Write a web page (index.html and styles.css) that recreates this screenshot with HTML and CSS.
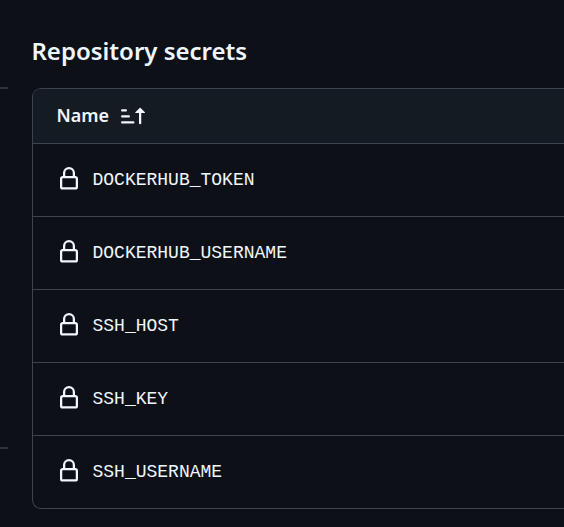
FILE: index.html
```html
<!DOCTYPE html>
<html lang="en">

<head>
    <meta charset="UTF-8">
    <meta name="viewport" content="width=device-width, initial-scale=1.0">
    <title>Repository secrets</title>
    <link rel="stylesheet" href="styles.css">
</head>

<body>
    <svg class="sprite" width="0" height="0">
        <symbol id="lock" viewBox="0 0 16 16">
            <path d="M4 4a4 4 0 0 1 8 0v2h.25c.966 0 1.75.784 1.75 1.75v5.5A1.75 1.75 0 0 1 12.25 15h-8.5A1.75 1.75 0 0 1 2 13.25v-5.5C2 6.784 2.784 6 3.75 6H4Zm8.25 3.5h-8.5a.25.25 0 0 0-.25.25v5.5c0 .138.112.25.25.25h8.5a.25.25 0 0 0 .25-.25v-5.5a.25.25 0 0 0-.25-.25ZM10.5 6V4a2.5 2.5 0 1 0-5 0v2Z" />
        </symbol>
    </svg>

    <div class="page">
        <div class="sidebar">
            <div class="divider"></div>
            <div class="divider"></div>
        </div>

        <div class="secrets">
            <h2 class="title">Repository secrets</h2>
            <div class="table">
                <div class="table-head">
                    <span class="label">Name</span>
                    <svg class="sort" viewBox="0 0 16 16">
                        <path d="m12.927 2.573 3 3A.25.25 0 0 1 15.75 6H13.5v6.75a.75.75 0 0 1-1.5 0V6H9.75a.25.25 0 0 1-.177-.427l3-3a.25.25 0 0 1 .354 0ZM0 12.25a.75.75 0 0 1 .75-.75h7.5a.75.75 0 0 1 0 1.5H.75a.75.75 0 0 1-.75-.75Zm0-4a.75.75 0 0 1 .75-.75h4.5a.75.75 0 0 1 0 1.5H.75A.75.75 0 0 1 0 8.25Zm0-4a.75.75 0 0 1 .75-.75h2.5a.75.75 0 0 1 0 1.5H.75A.75.75 0 0 1 0 4.25Z" />
                    </svg>
                </div>
                <div class="row"><svg class="lock"><use href="#lock" /></svg><code>DOCKERHUB_TOKEN</code></div>
                <div class="row"><svg class="lock"><use href="#lock" /></svg><code>DOCKERHUB_USERNAME</code></div>
                <div class="row"><svg class="lock"><use href="#lock" /></svg><code>SSH_HOST</code></div>
                <div class="row"><svg class="lock"><use href="#lock" /></svg><code>SSH_KEY</code></div>
                <div class="row"><svg class="lock"><use href="#lock" /></svg><code>SSH_USERNAME</code></div>
            </div>
        </div>
    </div>
</body>

</html>
```
FILE: styles.css
```css
* {
    box-sizing: border-box;
}

body {
    margin: 0;
    background-color: #0d1117;
    color: #f0f6fc;
    font-family: "Noto Sans", sans-serif;
    overflow: hidden;
}

.sprite {
    display: none;
}

.page {
    display: flex;
    height: 527px;
}

.sidebar {
    width: 8px;
    margin-right: 24px;
    padding-top: 87px;
}

.divider {
    height: 2px;
    margin-bottom: 358px;
    background-color: #2d323a;
}

.secrets {
    flex: 1;
    padding-top: 33px;
}

.title {
    margin: 0 0 19px -0.6px;
    font-size: 24px;
    line-height: 36px;
    font-weight: 600;
}

.table {
    border: 1px solid #3d444d;
    border-right: 0;
    border-radius: 9px 0 0 9px;
    overflow: hidden;
}

.table-head {
    display: flex;
    align-items: center;
    height: 54px;
    padding-left: 23.5px;
    padding-bottom: 1px;
    background-color: #151b23;
    font-size: 18px;
    font-weight: 600;
}

.label {
    margin-bottom: 2px;
}

.sort {
    width: 24px;
    height: 24px;
    margin-left: 11.5px;
    fill: #f0f6fc;
}

.row {
    display: flex;
    align-items: center;
    height: 73px;
    padding-left: 24px;
    border-top: 1px solid #3d444d;
}

.lock {
    width: 24px;
    height: 24px;
    margin-right: 11.5px;
    margin-bottom: 2px;
    fill: #f0f6fc;
}

code {
    font-family: "Liberation Mono", monospace;
    font-size: 18px;
}
```
